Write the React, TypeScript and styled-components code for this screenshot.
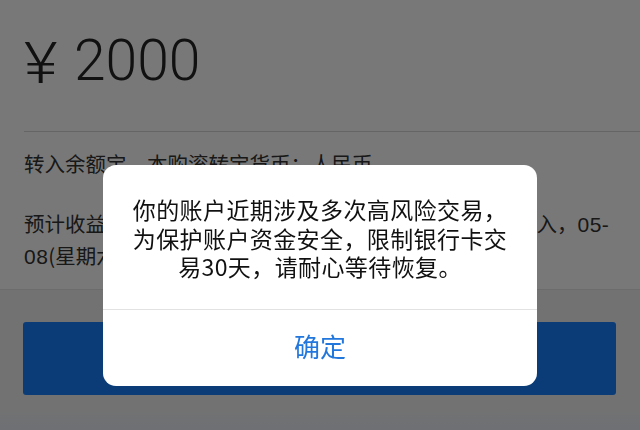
import styled, { createGlobalStyle } from "styled-components";

const GlobalStyle = createGlobalStyle`
  html, body {
    margin: 0;
    padding: 0;
    background: #f3f3f3;
  }
  body {
    width: 640px;
    height: 430px;
    overflow: hidden;
    font-family: "Noto Sans CJK SC", "Noto Sans", sans-serif;
  }
`;

const App = () => {
  return (
    <>
      <GlobalStyle />
      <Page>
        <Card>
          <Amount>
            <Yen>¥</Yen>
            <span>2000</span>
          </Amount>
          <Info>
            <p>转入余额宝，本购滚转宝货币：人民币</p>
            <p>
              预计收益到账时间以实际份额确认为准，请您留意每日转入，<Num>05-</Num>
              <br />
              <Num>08</Num>(星期六)收益到账后可查看
            </p>
          </Info>
        </Card>
        <ButtonRow>
          <PrimaryButton>确认转入</PrimaryButton>
        </ButtonRow>
        <Footer />
      </Page>
      <Overlay />
      <Dialog>
        <Message>
          你的账户近期涉及多次高风险交易，
          <br />
          为保护账户资金安全，限制银行卡交
          <br />
          易30天，请耐心等待恢复。
        </Message>
        <DialogButton>确定</DialogButton>
      </Dialog>
    </>
  );
};

const Page = styled.div`
  display: flex;
  flex-direction: column;
  width: 640px;
  height: 430px;
`;

const Card = styled.section`
  background: #ffffff;
  padding-left: 24px;
  height: 290px;
  box-sizing: border-box;
  border-bottom: 1px solid #e6e6e6;
`;

const Amount = styled.div`
  display: flex;
  align-items: center;
  gap: 20px;
  height: 132px;
  box-sizing: border-box;
  padding-bottom: 10px;
  border-bottom: 1px solid #d6d6d6;
  font-family: Roboto, "Liberation Sans", sans-serif;
  font-weight: 300;
  font-size: 57px;
  color: #262626;
`;

const Yen = styled.span`
  display: inline-block;
  font-size: 58px;
  transform: scaleX(1.12);
  transform-origin: left center;
  margin-top: 4px;
`;

const Info = styled.div`
  padding-top: 16px;
  padding-right: 24px;
  font-size: 20.5px;
  line-height: 30px;
  color: #333333;
  p {
    margin: 0 0 30px 0;
    white-space: nowrap;
  }
`;

const Num = styled.span`
  font-family: "Liberation Sans", Arial, sans-serif;
  font-size: 21px;
  letter-spacing: 0.5px;
`;

const ButtonRow = styled.div`
  padding: 32px 24px 0 23px;
`;

const PrimaryButton = styled.button`
  display: flex;
  align-items: center;
  justify-content: center;
  width: 100%;
  height: 73px;
  border: none;
  border-radius: 3px;
  background: #1a80ff;
  color: #ffffff;
  font-family: "Noto Sans CJK SC", sans-serif;
  font-size: 24px;
`;

const Footer = styled.div`
  flex: 1;
  margin-top: 14px;
  background: linear-gradient(#f3f3f3, #e9eef6);
`;

const Overlay = styled.div`
  position: fixed;
  inset: 0;
  background: rgba(0, 0, 0, 0.53);
`;

const Dialog = styled.div`
  position: fixed;
  left: 103px;
  top: 165px;
  width: 434px;
  height: 221px;
  display: flex;
  flex-direction: column;
  background: #ffffff;
  border-radius: 13px;
  overflow: hidden;
`;

const Message = styled.div`
  height: 145px;
  box-sizing: border-box;
  padding-top: 30px;
  border-bottom: 1px solid #e2e2e2;
  text-align: center;
  font-size: 23px;
  line-height: 28.5px;
  color: #111111;
  letter-spacing: 0.4px;
`;

const DialogButton = styled.button`
  flex: 1;
  border: none;
  background: transparent;
  color: #2277dd;
  font-family: "Noto Sans CJK SC", sans-serif;
  font-size: 26px;
  padding-bottom: 6px;
`;

export default App;
